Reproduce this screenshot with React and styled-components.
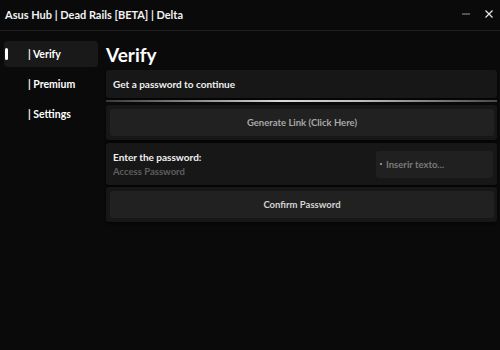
import React from "react";
import styled, { createGlobalStyle } from "styled-components";

const GlobalStyle = createGlobalStyle`
  html, body {
    margin: 0;
    padding: 0;
    background: #0a0a0a;
  }
  * {
    box-sizing: border-box;
  }
`;

const Window = styled.div`
  width: 500px;
  height: 350px;
  background: #0a0a0a;
  color: #fff;
  font-family: "Lato", "Open Sans", sans-serif;
  font-weight: 700;
  overflow: hidden;
`;

const TitleBar = styled.div`
  height: 31px;
  display: flex;
  align-items: center;
  justify-content: space-between;
  padding: 0 6px 2px 5px;
  border-bottom: 1px solid #1e1e1e;
`;

const WindowTitle = styled.div`
  font-size: 11px;
  color: #f2f2f2;
`;

const Controls = styled.div`
  display: flex;
  align-items: center;
  gap: 13px;
`;

const Body = styled.div`
  display: flex;
  padding-top: 10px;
`;

const Sidebar = styled.div`
  width: 100px;
  padding: 0 2px 0 4px;
  display: flex;
  flex-direction: column;
  gap: 4px;
`;

const Tab = styled.div`
  position: relative;
  height: 26px;
  display: flex;
  align-items: center;
  padding-left: 24px;
  border-radius: 4px;
  font-size: 10.5px;
  color: #fff;
  background: ${(p) => (p.active ? "#191919" : "transparent")};
`;

const Indicator = styled.div`
  position: absolute;
  left: 1px;
  top: 7px;
  width: 3px;
  height: 12px;
  border-radius: 2px;
  background: #fff;
`;

const Content = styled.div`
  flex: 1;
  margin-left: 6px;
  margin-right: 3px;
  display: flex;
  flex-direction: column;
`;

const Heading = styled.div`
  font-size: 19px;
  line-height: 24px;
  margin: 2px 0 3px;
  color: #fff;
`;

const Card = styled.div`
  background: #171717;
  border-radius: 3px;
  height: ${(p) => p.h}px;
  padding: ${(p) => p.pad || "0 7px"};
  display: flex;
  align-items: center;
  box-shadow: 0 2px 3px rgba(0, 0, 0, 0.6);
`;

const CardText = styled.div`
  font-size: 10px;
  color: #f0f0f0;
`;

const Divider = styled.div`
  height: 2px;
  margin: 2px 0 3px;
  background: linear-gradient(90deg, #3a3a3a 0%, #d8d8d8 45%, #bdbdbd 65%, #4a4a4a 100%);
`;

const ActionButton = styled.div`
  flex: 1;
  height: 27px;
  border-radius: 3px;
  background: #212121;
  display: flex;
  align-items: center;
  justify-content: center;
  font-size: 9.5px;
  color: ${(p) => p.color || "#a8a8a8"};
`;

const FieldLabels = styled.div`
  flex: 1;
  display: flex;
  flex-direction: column;
  gap: 3px;
  padding-left: 3px;
`;

const Sub = styled.div`
  font-size: 9.5px;
  color: #5e5e5e;
`;

const InputBox = styled.div`
  width: 117px;
  height: 27px;
  border-radius: 3px;
  background: #202020;
  display: flex;
  align-items: center;
  padding-left: 4px;
  font-size: 9.5px;
  color: #7a7a7a;
  gap: 4px;
`;

const Dot = styled.span`
  width: 2px;
  height: 2px;
  background: #8a8a8a;
`;

const Gap = styled.div`
  height: ${(p) => p.h}px;
`;

export default function App() {
  return (
    <>
      <GlobalStyle />
      <Window>
        <TitleBar>
          <WindowTitle>Asus Hub | Dead Rails [BETA] | Delta</WindowTitle>
          <Controls>
            <svg width="10" height="10" viewBox="0 0 10 10">
              <line x1="1" y1="5" x2="9" y2="5" stroke="#9a9a9a" strokeWidth="1" />
            </svg>
            <svg width="10" height="10" viewBox="0 0 10 10">
              <path d="M1.5 1.5 L8.5 8.5 M8.5 1.5 L1.5 8.5" stroke="#e8e8e8" strokeWidth="1.2" />
            </svg>
          </Controls>
        </TitleBar>
        <Body>
          <Sidebar>
            <Tab active>
              <Indicator />| Verify
            </Tab>
            <Tab>| Premium</Tab>
            <Tab>| Settings</Tab>
          </Sidebar>
          <Content>
            <Heading>Verify</Heading>
            <Card h={28}>
              <CardText>Get a password to continue</CardText>
            </Card>
            <Divider />
            <Card h={35} pad="0 3px 0 4px">
              <ActionButton>Generate Link (Click Here)</ActionButton>
            </Card>
            <Gap h={3} />
            <Card h={42} pad="0 4px">
              <FieldLabels>
                <CardText>Enter the password:</CardText>
                <Sub>Access Password</Sub>
              </FieldLabels>
              <InputBox>
                <Dot />
                Inserir texto...
              </InputBox>
            </Card>
            <Gap h={2} />
            <Card h={35} pad="0 3px 0 4px">
              <ActionButton color="#d4d4d4">Confirm Password</ActionButton>
            </Card>
          </Content>
        </Body>
      </Window>
    </>
  );
}
